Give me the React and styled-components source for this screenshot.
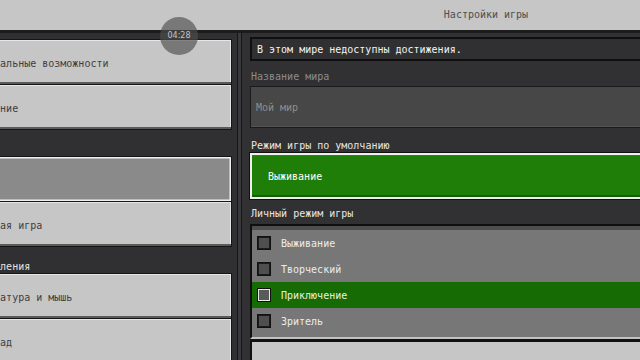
import React from "react";
import styled, { createGlobalStyle } from "styled-components";

const Global = createGlobalStyle`
  html, body { margin: 0; padding: 0; background: #313133; overflow: hidden; }
  * { box-sizing: border-box; }
  body { font-family: "DejaVu Sans Mono", "Liberation Mono", monospace; font-size: 10px; }
`;

const Screen = styled.div`
  position: relative;
  width: 640px;
  height: 360px;
  overflow: hidden;
  background: #313133;
`;

const Header = styled.header`
  display: grid;
  grid-template-columns: 297px 5px 1fr;
  margin-left: -60px;
  width: 790px;
  height: 33px;
  background: #c6c6c6;
  border-bottom: 3px solid #1c1c1c;
`;

const Title = styled.h1`
  grid-column: 3;
  margin: 0;
  padding-top: 3px;
  font: 400 10px/24px "DejaVu Sans Mono", monospace;
  color: #4e4e4e;
  text-align: center;
`;

const Body = styled.div`
  display: flex;
  margin-left: -60px;
  width: 790px;
  height: 327px;
`;

const LeftPanel = styled.nav`
  width: 297px;
  flex: none;
  padding: 6px 5px 0 6px;
  background: #303032;
  display: flex;
  flex-direction: column;
`;

const NavButton = styled.div`
  flex: none;
  height: 46px;
  margin-top: ${(p) => (p.$stacked ? "-1px" : "0")};
  padding: 2px 0 0 23px;
  display: flex;
  align-items: center;
  white-space: nowrap;
  border: 1px solid #151515;
  color: ${(p) => (p.$selected ? "#ffffff" : "#3e3e3e")};
  background: ${(p) => (p.$selected ? "#8a8a8a" : "#c6c6c6")};
  box-shadow: ${(p) =>
    p.$selected
      ? "inset 0 0 0 1.5px #f0f0f0"
      : "inset 0 -2px 0 #5a5a5a, inset 0 0 0 1px #e6e6e6"};
`;

const NavSection = styled.div`
  flex: none;
  height: 26px;
  padding: 0 0 0 24px;
  display: flex;
  align-items: flex-end;
  line-height: 12px;
  white-space: nowrap;
  color: #e4e4e4;
`;

const Divider = styled.div`
  flex: none;
  width: 5px;
  background: #3a3a3c;
  border-left: 1px solid #161616;
  border-right: 1px solid #161616;
`;

const RightPanel = styled.main`
  flex: 1;
  padding: 4px 0 0 8px;
  display: flex;
  flex-direction: column;
  background: #313133;
`;

const Notice = styled.div`
  flex: none;
  height: 24px;
  padding-left: 5px;
  display: flex;
  align-items: center;
  border: 2px solid #0f0f0f;
  background: #303032;
  color: #f4f4f4;
  white-space: nowrap;
`;

const Label = styled.div`
  flex: none;
  height: 25px;
  padding: 0 0 ${(p) => p.$below}px 1px;
  display: flex;
  align-items: flex-end;
  line-height: 12px;
  white-space: nowrap;
  color: ${(p) => (p.$dim ? "#8c8c8c" : "#e6e6e6")};
`;

const TextField = styled.div`
  flex: none;
  height: 42px;
  padding: 1px 0 0 5px;
  display: flex;
  align-items: center;
  border: 1px solid #1a1a1a;
  background: #474747;
  box-shadow: inset 0 -1px 0 #555555;
  color: #8e8e8e;
`;

const Dropdown = styled.div`
  flex: none;
  height: 46px;
  padding: 1px 0 0 16px;
  display: flex;
  align-items: center;
  border: 2px solid #eeeeee;
  outline: 1px solid #111111;
  background: #1f7e07;
  box-shadow: inset 0 -2px 0 #145f05, inset 0 1px 0 #17930a;
  color: #ffffff;
`;

const ChoiceList = styled.div`
  flex: none;
  padding: 4px 0 3px;
  border: 2px solid #0f0f0f;
  border-bottom: 2px solid #c2c2c2;
  background: #777777;
  box-shadow: inset 0 4px 0 #4e4e4e;
  display: flex;
  flex-direction: column;
`;

const Choice = styled.div`
  height: 26px;
  padding-left: 5px;
  display: flex;
  align-items: center;
  gap: 10px;
  background: ${(p) => (p.$active ? "#176b04" : "transparent")};
  color: ${(p) => (p.$active ? "#e6f2e2" : "#ececec")};
`;

const Box = styled.span`
  width: 14px;
  height: 14px;
  flex: none;
  border: 1px solid #111111;
  background: ${(p) => (p.$active ? "#5a5a5a" : "#4f4f4f")};
  box-shadow: inset 0 0 0 1px ${(p) => (p.$active ? "#e8e8e8" : "#1c1c1c")};
`;

const NextButton = styled.div`
  flex: 1;
  border-top: 3px solid #111111;
  border-left: 2px solid #111111;
  background: #c6c6c6;
`;

const Timer = styled.div`
  position: absolute;
  left: 160px;
  top: 17px;
  width: 38px;
  height: 38px;
  border-radius: 50%;
  background: rgba(78, 78, 78, 0.65);
  display: flex;
  align-items: center;
  justify-content: center;
  font: 400 8px/1 "DejaVu Sans", sans-serif;
  color: #c4c4c4;
`;

const modes = ["Выживание", "Творческий", "Приключение", "Зритель"];

export default function App() {
  return (
    <Screen>
      <Global />
      <Header>
        <Title>Настройки игры</Title>
      </Header>
      <Body>
        <LeftPanel>
          <NavButton>Специальные возможности</NavButton>
          <NavButton $stacked>Хранение</NavButton>
          <NavSection>Мир</NavSection>
          <NavButton $selected>Игра</NavButton>
          <NavButton $stacked>Сетевая игра</NavButton>
          <NavSection>Управления</NavSection>
          <NavButton>Клавиатура и мышь</NavButton>
          <NavButton $stacked>Геймпад</NavButton>
        </LeftPanel>
        <Divider />
        <RightPanel>
          <Notice>В этом мире недоступны достижения.</Notice>
          <Label $dim $below={3}>Название мира</Label>
          <TextField>Мой мир</TextField>
          <Label $below={1}>Режим игры по умолчанию</Label>
          <Dropdown>Выживание</Dropdown>
          <Label $below={4}>Личный режим игры</Label>
          <ChoiceList>
            {modes.map((m, i) => (
              <Choice key={m} $active={i === 2}>
                <Box $active={i === 2} />
                {m}
              </Choice>
            ))}
          </ChoiceList>
          <NextButton />
        </RightPanel>
      </Body>
      <Timer>04:28</Timer>
    </Screen>
  );
}
